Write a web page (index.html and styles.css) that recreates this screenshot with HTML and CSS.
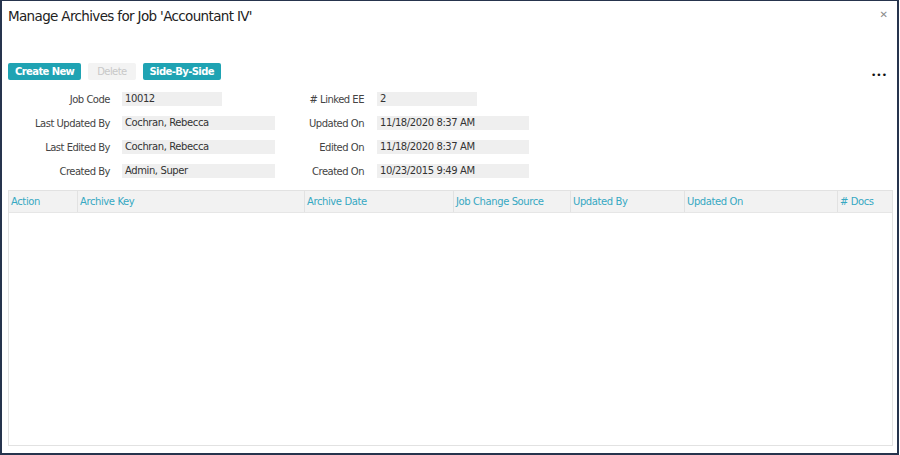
FILE: index.html
```html
<!DOCTYPE html>
<html lang="en">
<head>
  <meta charset="UTF-8" />
  <title>Manage Archives</title>
  <link rel="stylesheet" href="styles.css">
</head>
<body>
  <div class="dialogo">
    <div class="cabecera">
      <h1>Manage Archives for Job 'Accountant IV'</h1>
      <span class="cerrar">&#x2715;</span>
    </div>

    <div class="barra">
      <button class="boton">Create New</button>
      <button class="boton inactivo">Delete</button>
      <button class="boton">Side-By-Side</button>
      <span class="mas">&bull;&bull;&bull;</span>
    </div>

    <div class="ficha">
      <label>Job Code</label>
      <div class="valor corto">10012</div>
      <label># Linked EE</label>
      <div class="valor corto">2</div>

      <label>Last Updated By</label>
      <div class="valor">Cochran, Rebecca</div>
      <label>Updated On</label>
      <div class="valor">11/18/2020 8:37 AM</div>

      <label>Last Edited By</label>
      <div class="valor">Cochran, Rebecca</div>
      <label>Edited On</label>
      <div class="valor">11/18/2020 8:37 AM</div>

      <label>Created By</label>
      <div class="valor">Admin, Super</div>
      <label>Created On</label>
      <div class="valor">10/23/2015 9:49 AM</div>
    </div>

    <div class="tabla">
      <div class="encabezado">
        <div class="col" style="width: 69px">Action</div>
        <div class="col" style="width: 227px">Archive Key</div>
        <div class="col" style="width: 149px">Archive Date</div>
        <div class="col" style="width: 117px">Job Change Source</div>
        <div class="col" style="width: 114px">Updated By</div>
        <div class="col" style="width: 153px">Updated On</div>
        <div class="col ultima">&#35; Docs</div>
      </div>
      <div class="cuerpo"></div>
    </div>
  </div>
</body>
</html>
```

FILE: styles.css
```css
html, body {
  margin: 0;
  height: 100%;
}
body {
  font-family: 'DejaVu Sans', Verdana, sans-serif;
  font-size: 10px;
  color: #333;
  background: #fff;
}
.dialogo {
  box-sizing: border-box;
  width: 899px;
  height: 455px;
  border: 2px solid #26344d;
  border-top-width: 1px;
  padding: 0 4px 7px 6px;
  display: flex;
  flex-direction: column;
}
.cabecera {
  display: flex;
  justify-content: space-between;
  align-items: flex-start;
  height: 62px;
}
h1 {
  margin: 7px 0 0 0;
  font-size: 13.5px;
  font-weight: normal;
  color: #222;
  letter-spacing: -0.65px;
}
.cerrar {
  margin: 8px 5px 0 0;
  font-size: 10px;
  color: #8a8a8a;
}
.barra {
  display: flex;
  align-items: center;
  gap: 7px;
  height: 17px;
}
.boton {
  height: 17px;
  padding: 0 7px;
  border: none;
  border-radius: 2px;
  background: #1fa3b3;
  color: #fff;
  font-family: inherit;
  font-size: 10px;
  font-weight: bold;
  letter-spacing: -0.6px;
}
.boton.inactivo {
  background: #f3f3f3;
  color: #c8c8c8;
  font-weight: normal;
  padding: 0 9px;
}
.mas {
  margin-left: auto;
  margin-right: 6px;
  margin-top: 6px;
  font-size: 9px;
  color: #111;
}
.ficha {
  display: grid;
  grid-template-columns: 102px 153px 77px 153px;
  column-gap: 12px;
  row-gap: 10px;
  margin-top: 12px;
  align-items: center;
}
.ficha label {
  text-align: right;
  color: #444;
  letter-spacing: -0.5px;
}
.valor {
  height: 14px;
  line-height: 14px;
  padding-left: 3px;
  background: #efefef;
  letter-spacing: -0.4px;
}
.valor.corto {
  width: 97px;
}
.ficha .valor:nth-child(4n) {
  margin-left: 1px;
}
.tabla {
  flex: 1;
  margin-top: 12px;
  border: 1px solid #e2e2e2;
  display: flex;
  flex-direction: column;
}
.encabezado {
  display: flex;
  height: 21px;
  background: #f2f2f2;
  border-bottom: 1px solid #e6e6e6;
}
.col {
  box-sizing: border-box;
  padding-left: 2px;
  line-height: 21px;
  color: #36a8c2;
  border-right: 1px solid #e2e2e2;
  letter-spacing: -0.4px;
}
.col.ultima {
  flex: 1;
  border-right: none;
}
.cuerpo {
  flex: 1;
}
```
